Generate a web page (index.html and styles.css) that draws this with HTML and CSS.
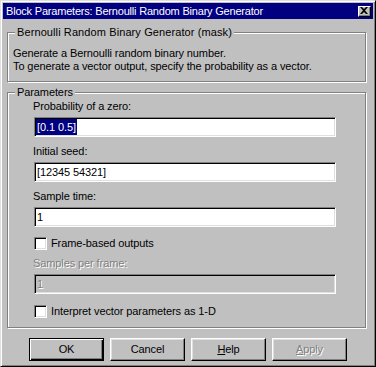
FILE: index.html
```html
<!DOCTYPE html>
<html lang="en">
<head>
  <meta charset="UTF-8" />
  <title>Block Parameters: Bernoulli Random Binary Generator</title>
  <link rel="stylesheet" href="styles.css">
</head>
<body>

  <div class="window">
    <div class="titlebar">
      <span class="title">Block Parameters: Bernoulli Random Binary Generator</span>
      <div class="close">
        <svg width="8" height="7" viewBox="0 0 8 7">
          <path d="M0 0h2l2 2 2-2h2L5 3.5 8 7H6L4 5 2 7H0l3-3.5z" fill="#000"/>
        </svg>
      </div>
    </div>

    <div class="content">
      <div class="group group-desc">
        <div class="group-title">Bernoulli Random Binary Generator (mask)</div>
        <p class="desc">Generate a Bernoulli random binary number.<br>To generate a vector output, specify the probability as a vector.</p>
      </div>

      <div class="group group-params">
        <div class="group-title">Parameters</div>

        <div class="field first">
          <div class="field-label">Probability of a zero:</div>
          <div class="edit"><span class="sel">[0.1 0.5]</span></div>
        </div>

        <div class="field">
          <div class="field-label">Initial seed:</div>
          <div class="edit">[12345 54321]</div>
        </div>

        <div class="field">
          <div class="field-label">Sample time:</div>
          <div class="edit">1</div>
        </div>

        <div class="check check-frame">
          <span class="box"></span>
          <span class="check-label">Frame-based outputs</span>
        </div>

        <div class="field disabled">
          <div class="field-label">Samples per frame:</div>
          <div class="edit">1</div>
        </div>

        <div class="check check-1d">
          <span class="box"></span>
          <span class="check-label">Interpret vector parameters as 1-D</span>
        </div>
      </div>

      <div class="buttons">
        <div class="btn default">OK</div>
        <div class="btn">Cancel</div>
        <div class="btn"><u>H</u>elp</div>
        <div class="btn off"><u>A</u>pply</div>
      </div>
    </div>
  </div>

</body>
</html>
```

FILE: styles.css
```css
* {
  box-sizing: border-box;
  margin: 0;
  padding: 0;
}

body {
  background: #c0c0c0;
  font-family: "Liberation Sans", Arial, sans-serif;
  font-size: 11px;
  line-height: 13px;
  letter-spacing: -0.1px;
  color: #000;
}

.window {
  width: 376px;
  height: 367px;
  padding: 2px;
  border: 1px solid;
  border-color: #dfdfdf #000 #000 #dfdfdf;
  box-shadow: inset 1px 1px #fff, inset -1px -1px #808080;
  background: #c0c0c0;
}

.titlebar {
  height: 16px;
  background: #000080;
  color: #fff;
  display: flex;
  align-items: center;
  justify-content: space-between;
  padding: 0 2px 0 3px;
}

.title {
  line-height: 16px;
  letter-spacing: -0.2px;
}

.close {
  width: 13px;
  height: 11px;
  background: #c0c0c0;
  border: 1px solid;
  border-color: #fff #000 #000 #fff;
  box-shadow: inset -1px -1px #808080;
  display: flex;
  align-items: center;
  justify-content: center;
}

.close svg {
  display: block;
  margin: 0 1px 1px 0;
}

.content {
  padding: 0 0 0 4px;
}

/* etched frames */
.group {
  width: 359px;
  border: 1px solid #808080;
  box-shadow: inset 1px 1px #fff, 1px 1px #fff;
}

.group-title {
  width: fit-content;
  margin: -7px 0 0 7px;
  padding: 0 2px;
  background: #c0c0c0;
}

.group-desc {
  margin-top: 13px;
  padding: 0 0 8px 5px;
}

.group-desc .group-title {
  margin-left: 2px;
  letter-spacing: 0.1px;
}

.desc {
  margin-top: 8px;
}

.group-params {
  margin-top: 10px;
  padding: 0 0 9px 26px;
}

.group-params .group-title {
  margin-left: -19px;
}

.field {
  margin-top: 8px;
}

.field.first {
  margin-top: 1px;
}

.field-label {
  margin-left: -1px;
}

.edit {
  width: 302px;
  height: 20px;
  margin-top: 4px;
  padding: 1px 0 1px 2px;
  line-height: 16px;
  background: #fff;
  border: 1px solid;
  border-color: #808080 #fff #fff #808080;
  box-shadow: inset 1px 1px #000, inset -1px -1px #dfdfdf;
}

.sel {
  display: inline-block;
  background: #000080;
  color: #fff;
  margin-left: -1px;
  padding: 0 1px;
}

.disabled .field-label,
.disabled .edit {
  color: #808080;
  text-shadow: 1px 1px #fff;
}

.disabled .edit {
  background: #c0c0c0;
}

.check {
  display: flex;
  align-items: center;
  gap: 4px;
  height: 13px;
}

.check-frame {
  margin-top: 10px;
}

.disabled {
  margin-top: 7px;
}

.check-1d {
  margin-top: 11px;
}

.box {
  width: 13px;
  height: 13px;
  background: #fff;
  border: 1px solid;
  border-color: #808080 #fff #fff #808080;
  box-shadow: inset 1px 1px #000, inset -1px -1px #dfdfdf;
}

.buttons {
  display: flex;
  gap: 6px;
  margin-top: 10px;
  padding-left: 22px;
}

.btn {
  width: 75px;
  height: 23px;
  display: flex;
  align-items: center;
  justify-content: center;
  border: 1px solid;
  border-color: #fff #000 #000 #fff;
  box-shadow: inset -1px -1px #808080, inset 1px 1px #dfdfdf;
}

.btn.default {
  border-color: #000;
  box-shadow: inset 1px 1px #fff, inset -1px -1px #000, inset -2px -2px #808080;
}

.btn u {
  text-decoration: underline;
}

.btn.off {
  color: #808080;
  text-shadow: 1px 1px #fff;
}
```
